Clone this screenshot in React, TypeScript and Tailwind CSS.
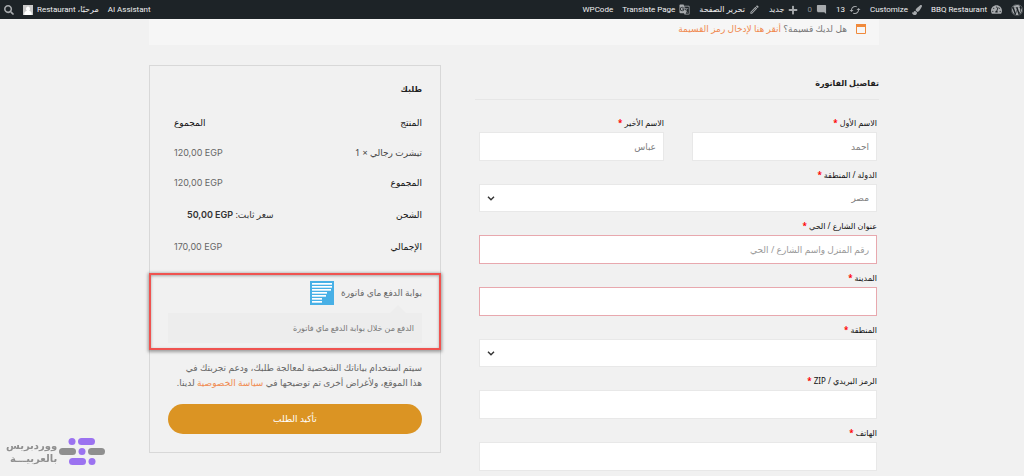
import type { ReactNode } from "react";
import { FaWordpress, FaPaintBrush, FaPlus, FaSearch, FaTachometerAlt } from "react-icons/fa";
import { MdOutlineEdit, MdSync, MdModeComment, MdGTranslate } from "react-icons/md";

const arabic = "font-['Noto_Sans','DejaVu_Sans',sans-serif]";

function BarItem({ icon, children }: { icon?: ReactNode; children?: ReactNode }) {
  return (
    <a href="#" className="flex items-center gap-1 whitespace-nowrap text-[#f0f0f1]">
      {icon}
      {children && <span>{children}</span>}
    </a>
  );
}

function AdminBar() {
  const icon = "size-[11px] shrink-0 text-[#a7aaad]";
  return (
    <nav className="flex h-[19px] items-center justify-between bg-[#1d2327] pr-px pl-1 font-['Roboto','DejaVu_Sans',sans-serif] text-[8px]">
      <div className="flex items-center gap-[9px]">
        <BarItem icon={<FaWordpress aria-label="WordPress" className="size-3 shrink-0 text-[#a7aaad]" />} />
        <BarItem icon={<FaTachometerAlt className={icon} />}>BBQ Restaurant</BarItem>
        <BarItem icon={<FaPaintBrush className="size-[10px] shrink-0 text-[#a7aaad]" />}>Customize</BarItem>
        <BarItem icon={<MdSync className="size-3 shrink-0 rotate-90 text-[#a7aaad]" />}>13</BarItem>
        <BarItem icon={<MdModeComment className={icon} />}>
          <span className="text-[#8c8f94]">0</span>
        </BarItem>
        <BarItem icon={<FaPlus className="size-[10px] text-[#a7aaad]" />}>جديد</BarItem>
        <BarItem icon={<MdOutlineEdit className={icon} />}>تحرير الصفحة</BarItem>
        <BarItem icon={<MdGTranslate className={icon} />}>Translate Page</BarItem>
        <BarItem>WPCode</BarItem>
      </div>
      <div className="flex items-center gap-[9px]">
        <BarItem>AI Assistant</BarItem>
        <a href="#" className="flex items-center gap-1 whitespace-nowrap text-[#f0f0f1]">
          <span>مرحبًا، Restaurant</span>
          <svg viewBox="0 0 10 10" className="size-[10px]" aria-hidden="true">
            <path d="M0 0h10v10H0z" fill="#c9c9c9" />
            <path d="M5 1.5a2.1 2.3 0 0 1 1.1 4.2c1.6.4 2.5 1.2 2.6 2.8v1.5H1.3V8.500c.1-1.600 1-2.400 2.600-2.800A2.100 2.300 0 0 1 5 1.500z" fill="#fff" />
          </svg>
        </a>
        <button type="button" aria-label="بحث">
          <FaSearch className="size-[10px] text-[#a7aaad]" />
        </button>
      </div>
    </nav>
  );
}

type FieldProps = {
  id: string;
  label: string;
  value?: string;
  placeholder?: string;
  invalid?: boolean;
  options?: string[];
};

function Field({ id, label, value, placeholder, invalid, options }: FieldProps) {
  return (
    <div className="min-w-0">
      <label htmlFor={id} className="block h-[18px] text-[8px] leading-[18px] text-[#111]">
        {label} <span className="font-bold text-[#ff0000]">*</span>
      </label>
      {options ? (
        <div className="relative">
          <select
            id={id}
            defaultValue={options[0]}
            className="block h-7 w-full appearance-none border border-[#e8e8e8] bg-white px-[7px] text-[9px] text-[#808080]"
          >
            {options.map((o) => (
              <option key={o}>{o}</option>
            ))}
          </select>
          <svg viewBox="0 0 8 5" className="pointer-events-none absolute top-3 left-2 h-[5px] w-2" aria-hidden="true">
            <path d="M1 .8 4 3.800 7 .8" fill="none" stroke="#333" strokeWidth="1.400" />
          </svg>
        </div>
      ) : (
        <input
          id={id}
          type="text"
          defaultValue={value}
          placeholder={placeholder}
          className={`block h-[29px] w-full border bg-white px-[7px] text-[9px] text-[#808080] placeholder:text-[#9a9a9a] ${
            invalid ? "border-[#e8a8ae]" : "border-[#e8e8e8]"
          }`}
        />
      )}
    </div>
  );
}

function Billing() {
  return (
    <form className="min-w-0 pt-[10px]">
      <h2 className="h-[25px] border-b border-[#e6e6e6] text-[8px] leading-4 font-bold text-[#222]">تفاصيل الفاتورة</h2>
      <div className="mt-[14px] flex flex-col gap-[5px] pr-[2px] pl-1">
        <div className="grid grid-cols-2 gap-7">
          <Field id="first" label="الاسم الأول" value="احمد" />
          <Field id="last" label="الاسم الأخير" value="عباس" />
        </div>
        <Field id="country" label="الدولة / المنطقة" options={["مصر"]} />
        <Field id="street" label="عنوان الشارع / الحي" placeholder="رقم المنزل واسم الشارع / الحي" invalid />
        <Field id="city" label="المدينة" invalid />
        <Field id="region" label="المنطقة" options={[""]} />
        <Field id="zip" label="الرمز البريدي / ZIP" />
        <Field id="phone" label="الهاتف" />
      </div>
    </form>
  );
}

function GatewayLogo() {
  const bars = [
    [2, 20], [5, 20], [8, 19], [11, 15], [14, 14], [17, 10], [20, 10],
  ];
  return (
    <svg viewBox="0 0 24 24" className="size-6 shrink-0" aria-hidden="true">
      <path d="M0 0h24v24H0z" fill="#48b0e6" />
      {bars.map(([y, w]) => (
        <rect key={y} x="2" y={y} width={w} height="1.700" fill="#fff" />
      ))}
    </svg>
  );
}

function Order() {
  const th = "p-0 text-right font-normal text-[#111]";
  const td = "p-0 pl-[6px] text-left text-[#666]";
  const price = "font-['Inter',sans-serif]";
  return (
    <section className="min-w-0 self-start border border-[#d8d8d8] px-[18px] pb-[18px]">
      <h2 className="mt-[15px] h-[27px] text-[8px] leading-4 font-bold text-[#222]">طلبك</h2>
      <table className="w-full border-collapse text-[9px]">
        <tbody>
          <tr className="h-[30px]">
            <th className={th}>المنتج</th>
            <th className="p-0 pl-[6px] text-left font-normal text-[#111]">المجموع</th>
          </tr>
          <tr className="h-[30px]">
            <td className="p-0 text-right text-[#444]">تيشرت رجالي × 1</td>
            <td className={td}><span dir="ltr" className={price}>120,00 EGP</span></td>
          </tr>
          <tr className="h-[30px]">
            <th className={th}>المجموع</th>
            <td className={td}><span dir="ltr" className={price}>120,00 EGP</span></td>
          </tr>
          <tr className="h-[34px]">
            <th className={th}>الشحن</th>
            <td className="p-0 pl-[19px] text-left text-[#333]">
              سعر ثابت: <span dir="ltr" className="font-['Inter',sans-serif] font-semibold text-[#333]">50,00 EGP</span>
            </td>
          </tr>
          <tr className="h-[30px]">
            <th className={th}>الإجمالي</th>
            <td className={td}><span dir="ltr" className={price}>170,00 EGP</span></td>
          </tr>
        </tbody>
      </table>

      <div className="-mx-[19px] mt-[11px] border-2 border-[#ef5350] px-[17px] pt-[6px] pb-[5px] shadow-[0_1px_3px_1px_rgba(0,0,0,0.35),inset_0_1px_3px_rgba(0,0,0,0.3)]">
        <div className="flex items-center gap-[7px] text-[9px] text-[#666]">
          <span>بوابة الدفع ماي فاتورة</span>
          <GatewayLogo />
        </div>
        <svg viewBox="0 0 16 8" className="mr-4 block h-2 w-4" aria-hidden="true">
          <path d="M0 8 8 0l8 8z" fill="#ededed" />
        </svg>
        <p className="h-[30px] bg-[#ededed] px-2 text-[8px] leading-[30px] text-[#777]">
          الدفع من خلال بوابة الدفع ماي فاتورة
        </p>
      </div>

      <p className="mt-[10px] text-[9px] leading-[15px] text-[#666]">
        سيتم استخدام بياناتك الشخصية لمعالجة طلبك، ودعم تجربتك في
        <br />
        هذا الموقع، ولأغراض أخرى تم توضيحها في{" "}
        <a href="#" className="text-[#f08a50]">سياسة الخصوصية</a> لدينا.
      </p>
      <button type="button" className="mt-[14px] block h-[30px] w-full rounded-full bg-[#db9423] text-[9px] text-white">
        تأكيد الطلب
      </button>
    </section>
  );
}

function BrandMark() {
  return (
    <div className="fixed bottom-[10px] left-[6px] flex items-center gap-0.5">
      <svg viewBox="0 0 46 28" className="h-7 w-[46px]" aria-hidden="true">
        <g fill="#9b72f0">
          <circle cx="13" cy="3.500" r="3.500" />
          <rect x="19" width="17" height="7" rx="3.500" />
          <circle cx="23" cy="13.500" r="3.500" />
          <rect x="10" y="20" width="17" height="7" rx="3.500" />
          <circle cx="33" cy="23.500" r="3.500" />
        </g>
        <g fill="#8f8f8f">
          <rect y="10" width="17" height="7" rx="3.500" />
          <rect x="29" y="10" width="17" height="7" rx="3.500" />
        </g>
      </svg>
      <div className="text-[10px] leading-[13px] font-bold text-[#8f8f8f]">
        <div>ووردبريس</div>
        <div>بالعربيـــة</div>
      </div>
    </div>
  );
}

export default function App() {
  return (
    <div dir="rtl" className={`min-h-screen bg-[#f1f1f1] ${arabic}`}>
      <AdminBar />
      <main className="pr-[145px] pb-1 pl-[149px]">
        <div className="flex h-[26px] items-start gap-[9px] bg-[#f6f6f6] pt-1 pr-[13px] text-[9px] leading-3 text-[#777]">
          <svg viewBox="0 0 10 10" className="mt-px size-[10px]" aria-hidden="true">
            <path d="M.5 1h9v8.500h-9z" fill="none" stroke="#f08a3c" />
            <path d="M0 0h10v3H0z" fill="#f08a3c" />
          </svg>
          <p>
            هل لديك قسيمة؟ <a href="#" className="text-[#f08a50]">أنقر هنا لإدخال رمز القسيمة</a>
          </p>
        </div>
        <div className="grid grid-cols-[minmax(0,404fr)_minmax(0,292fr)] items-start gap-[34px] pt-5">
          <Billing />
          <Order />
        </div>
      </main>
      <BrandMark />
    </div>
  );
}
